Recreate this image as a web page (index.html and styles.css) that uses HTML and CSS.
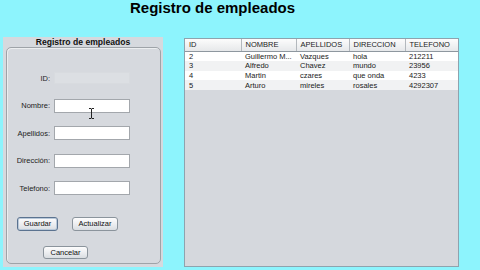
FILE: index.html
```html
<!DOCTYPE html>
<html lang="es">
<head>
<meta charset="utf-8">
<title>Registro de empleados</title>
<link rel="stylesheet" href="styles.css">
</head>
<body class="page">
  <h1 class="title">Registro de empleados</h1>
  <div class="main">
    <section class="form-panel">
      <div class="form-head">Registro de empleados</div>
      <div class="form-box">
        <div class="field-row"><label class="lbl">ID:</label><div class="input input-disabled"></div></div>
        <div class="field-row"><label class="lbl">Nombre:</label><div class="input"></div></div>
        <div class="field-row"><label class="lbl">Apellidos:</label><div class="input"></div></div>
        <div class="field-row"><label class="lbl">Dirección:</label><div class="input"></div></div>
        <div class="field-row"><label class="lbl">Telefono:</label><div class="input"></div></div>
        <div class="btn-row">
          <button class="btn btn-focus btn-guardar">Guardar</button>
          <button class="btn btn-actualizar">Actualizar</button>
        </div>
        <div class="btn-row2">
          <button class="btn btn-cancelar">Cancelar</button>
        </div>
      </div>
      <svg class="ibeam" width="7" height="11" viewBox="0 0 7 11"><path d="M1 0.5h2l0.5 0.5 0.5-0.5h2M3.5 1v9M1 10.5h2l0.5-0.5 0.5 0.5h2" fill="none" stroke="#222" stroke-width="1"/></svg>
    </section>
    <div class="table-panel">
      <table class="grid">
        <colgroup><col class="c1"><col class="c2"><col class="c3"><col class="c4"><col class="c5"></colgroup>
        <thead>
          <tr><th>ID</th><th>NOMBRE</th><th>APELLIDOS</th><th>DIRECCION</th><th>TELEFONO</th></tr>
        </thead>
        <tbody>
          <tr><td>2</td><td>Guillermo M...</td><td>Vazques</td><td>hola</td><td>212211</td></tr>
          <tr class="alt"><td>3</td><td>Alfredo</td><td>Chavez</td><td>mundo</td><td>23956</td></tr>
          <tr><td>4</td><td>Martin</td><td>czares</td><td>que onda</td><td>4233</td></tr>
          <tr class="alt"><td>5</td><td>Arturo</td><td>mireles</td><td>rosales</td><td>4292307</td></tr>
        </tbody>
      </table>
    </div>
  </div>
</body>
</html>
```
FILE: styles.css
```css
* { box-sizing: border-box; }
html, body { margin: 0; padding: 0; }
.page {
  width: 480px;
  height: 270px;
  background: #8df4fd;
  font-family: "Liberation Sans", Arial, sans-serif;
  overflow: hidden;
}
.title {
  margin: 0;
  height: 37px;
  padding: 0 0 0 130px;
  font-size: 15px;
  line-height: 15px;
  font-weight: bold;
  color: #000;
}
.main {
  display: flex;
  align-items: flex-start;
  padding-left: 3px;
  gap: 21px;
}
.form-panel {
  position: relative;
  width: 160px;
  height: 230px;
  background: #d6d9de;
  display: flex;
  flex-direction: column;
}
.form-head {
  height: 10px;
  font-size: 8.6px;
  line-height: 10px;
  font-weight: bold;
  text-align: center;
  color: #111;
}
.form-box {
  margin: 0 2px 3px 3px;
  flex: 1;
  border: 1px solid #9ea3a8;
  border-radius: 5px;
  box-shadow: inset 1px 1px 0 #eceef0;
  padding: 23px 0 0 0;
  display: flex;
  flex-direction: column;
}
.field-row {
  display: flex;
  align-items: center;
  height: 14px;
  margin-bottom: 13.5px;
}
.lbl {
  width: 43px;
  text-align: right;
  font-size: 7.5px;
  color: #222;
}
.input {
  margin-left: 4px;
  width: 76px;
  height: 14px;
  background: #fff;
  border: 1px solid #a3a7ac;
}
.input-disabled {
  background: #dcdfe3;
  border-color: #d8dbdf;
  height: 12px;
}
.btn-row {
  display: flex;
  gap: 14px;
  margin-top: 8px;
  padding-left: 10px;
}
.btn-row2 {
  display: flex;
  margin-top: 15px;
  padding-left: 36px;
}
.btn {
  height: 14px;
  padding: 0;
  font-family: "Liberation Sans", Arial, sans-serif;
  font-size: 7.5px;
  color: #111;
  border: 1px solid #8b949c;
  border-radius: 3px;
  background: linear-gradient(#fdfdfd, #e9ebee 60%, #d9dde1);
}
.btn-focus {
  border-color: #5b7390;
  box-shadow: inset 0 0 0 1px #b9c9da;
}
.btn-guardar { width: 41px; }
.btn-actualizar { width: 46px; }
.btn-cancelar { width: 45px; height: 13px; }
.ibeam {
  position: absolute;
  left: 85px;
  top: 71px;
}
.table-panel {
  margin-top: 1px;
  width: 275px;
  height: 229px;
  background: #d5d8dd;
  border: 1px solid #8ea3ae;
}
.grid {
  width: 273px;
  table-layout: fixed;
  border-collapse: collapse;
  font-size: 7.5px;
}
.c1 { width: 56px; }
.c2 { width: 55px; }
.c3 { width: 53px; }
.c4 { width: 56px; }
.c5 { width: 53px; }
.grid th {
  height: 12px;
  padding: 0 0 0 4px;
  text-align: left;
  font-weight: normal;
  color: #222;
  background: linear-gradient(#fcfcfc, #e6e8ea);
  border-right: 1px solid #b3b8bd;
  border-bottom: 1px solid #8e979f;
  white-space: nowrap;
  overflow: hidden;
}
.grid th:last-child { border-right: none; }
.grid td {
  height: 9.75px;
  padding: 0 0 0 4px;
  line-height: 9px;
  color: #1a1a1a;
  background: #fff;
  white-space: nowrap;
  overflow: hidden;
}
.grid tr.alt td { background: #f1f2f3; }
```
